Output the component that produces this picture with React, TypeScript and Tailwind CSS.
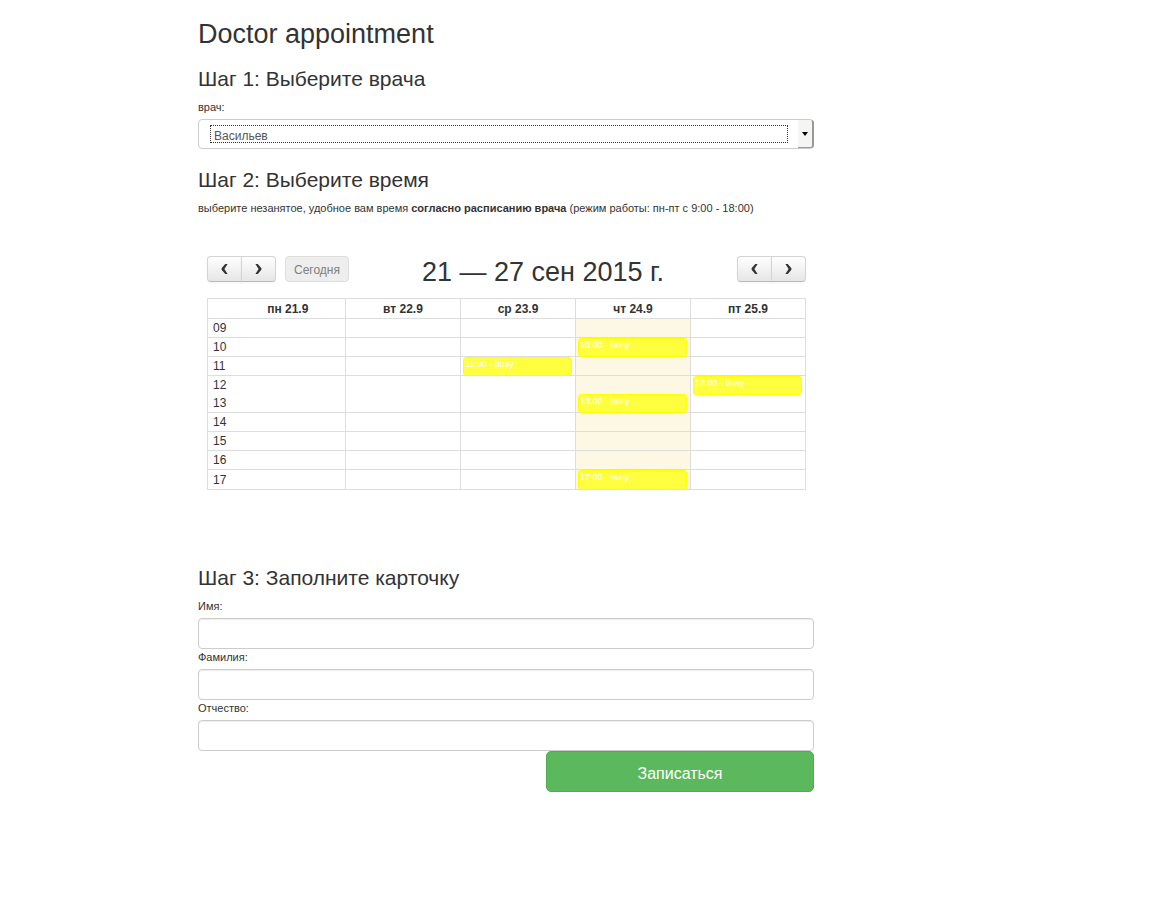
import React from "react";

const days = ["пн 21.9", "вт 22.9", "ср 23.9", "чт 24.9", "пт 25.9"];
const hours = ["09", "10", "11", "12", "13", "14", "15", "16", "17"];
const doctors = ["Васильев"];
const today = 3;

const busy: Record<string, number[]> = {
  "10": [3],
  "11": [2],
  "12": [4],
  "13": [3],
  "17": [3],
};

function Chevron({ direction }: { direction: "left" | "right" }) {
  return (
    <svg width="7" height="10" viewBox="0 0 7 10" aria-hidden="true">
      <path
        d={
          direction === "left"
            ? "M4.2 0H6.6L3.4 5L6.6 10H4.2L0.6 5.8V4.2Z"
            : "M2.8 0H0.4L3.6 5L0.4 10H2.8L6.4 5.8V4.2Z"
        }
        fill="#333"
      />
    </svg>
  );
}

function WeekButtons() {
  const base =
    "flex h-[26px] items-center justify-center border border-[#d4d4d4] border-b-[#bbb] bg-linear-to-b from-white to-[#e6e6e6] pb-px shadow-[0_1px_2px_rgba(0,0,0,0.05)]";
  return (
    <div className="flex">
      <button type="button" aria-label="Предыдущая неделя" className={`${base} w-[35px] rounded-l-[4px]`}>
        <Chevron direction="left" />
      </button>
      <button type="button" aria-label="Следующая неделя" className={`${base} -ml-px w-[35px] rounded-r-[4px]`}>
        <Chevron direction="right" />
      </button>
    </div>
  );
}

function StepTitle({ children }: { children: React.ReactNode }) {
  return <h2 className="text-[21px] leading-6">{children}</h2>;
}

function TextField({ id, label }: { id: string; label: string }) {
  return (
    <div>
      <label htmlFor={id} className="mb-1 block text-[11px] leading-4">
        {label}
      </label>
      <input
        id={id}
        type="text"
        className="block h-[31px] w-full rounded-[4px] border border-[#ccc] bg-white px-3 text-[13px] text-[#555] shadow-[inset_0_1px_1px_rgba(0,0,0,0.075)] outline-none"
      />
    </div>
  );
}

function Calendar() {
  return (
    <section className="mt-10 pl-[9px] pr-2">
      <div className="mb-[11px] flex items-start justify-between">
        <div className="flex gap-[9px]">
          <WeekButtons />
          <button
            type="button"
            disabled
            className="h-[26px] rounded-[4px] border border-[#ddd] bg-[#eee] px-2 pt-px text-[12px] text-[#808080]"
          >
            Сегодня
          </button>
        </div>
        <h2 className="mt-px text-[27px] leading-[30px]">21 — 27 сен 2015 г.</h2>
        <WeekButtons />
      </div>
      <table className="w-full table-fixed border-collapse border border-[#ddd] text-[12px]">
        <colgroup>
          <col className="w-[23px]" />
          <col />
          <col />
          <col />
          <col />
          <col />
        </colgroup>
        <thead>
          <tr className="h-5 border-b border-[#ddd]">
            <td />
            {days.map((day, i) => (
              <th
                key={day}
                scope="col"
                className={i === 0 ? "p-0 pt-px text-center font-bold leading-[18px]" : "border-l border-[#ddd] p-0 pt-px text-center font-bold leading-[18px]"}
              >
                {day}
              </th>
            ))}
          </tr>
        </thead>
        <tbody>
          {hours.map((hour) => (
            <tr key={hour} className={hour === "12" ? "" : "border-b border-[#ddd] last:h-5"}>
              <th scope="row" className="p-0 pl-[5px] pt-px text-left font-normal leading-[17px]">
                {hour}
              </th>
              {days.map((day, i) => (
                <td
                  key={day}
                  className={
                    i === today
                      ? "relative border-l border-[#ddd] bg-[#fcf8e3] p-0"
                      : i === 0
                        ? "relative p-0"
                        : "relative border-l border-[#ddd] p-0"
                  }
                >
                  {busy[hour]?.includes(i) && (
                    <div className="absolute -bottom-px left-0.5 right-[3px] top-0 overflow-hidden rounded-[3px] border border-[#ff0] bg-[#ffff40] px-px text-[9px] leading-[13px] text-white">
                      {hour}:00 - busy
                    </div>
                  )}
                </td>
              ))}
            </tr>
          ))}
        </tbody>
      </table>
    </section>
  );
}

export default function App() {
  return (
    <main className="min-h-screen bg-white pb-12 pl-[198px] pr-8 pt-[19px] font-['Liberation_Sans',Arial,sans-serif] text-[#333]">
      <form className="max-w-[616px]" onSubmit={(event) => event.preventDefault()}>
        <h1 className="mb-[18px] text-[27px] leading-[30px]">Doctor appointment</h1>

        <StepTitle>Шаг 1: Выберите врача</StepTitle>
        <label htmlFor="doctor" className="mb-1 mt-2 block text-[11px] leading-4">
          врач:
        </label>
        <div className="relative mb-[19px]">
          <select
            id="doctor"
            defaultValue={doctors[0]}
            className="block h-[30px] w-full appearance-none rounded-[4px] border border-[#ccc] bg-white pl-[15px] pr-7 pt-1 text-[12px] text-[#555] outline-none"
          >
            {doctors.map((name) => (
              <option key={name}>{name}</option>
            ))}
          </select>
          <span className="pointer-events-none absolute inset-y-1.5 left-3 right-[26px] border border-dotted border-[#333]" />
          <span className="pointer-events-none absolute inset-y-px right-0 flex w-4 items-center justify-center rounded-r-[3px] border-b border-r-2 border-[#999] bg-[#f5f5f3]">
            <svg width="6" height="4" viewBox="0 0 6 4" aria-hidden="true">
              <path d="M0 0H6L3 4Z" fill="#000" />
            </svg>
          </span>
        </div>

        <StepTitle>Шаг 2: Выберите время</StepTitle>
        <p className="mt-2 text-[11px] leading-4">
          выберите незанятое, удобное вам время <b>согласно расписанию врача</b> (режим работы: пн-пт с 9:00 - 18:00)
        </p>
        <Calendar />

        <div className="mb-2 mt-[76px]">
          <StepTitle>Шаг 3: Заполните карточку</StepTitle>
        </div>
        <TextField id="first-name" label="Имя:" />
        <TextField id="last-name" label="Фамилия:" />
        <TextField id="middle-name" label="Отчество:" />
        <button
          type="submit"
          className="ml-auto block h-[41px] w-[268px] rounded-[5px] border border-[#4cae4c] bg-[#5cb85c] pt-1 text-[16px] text-white"
        >
          Записаться
        </button>
      </form>
    </main>
  );
}
